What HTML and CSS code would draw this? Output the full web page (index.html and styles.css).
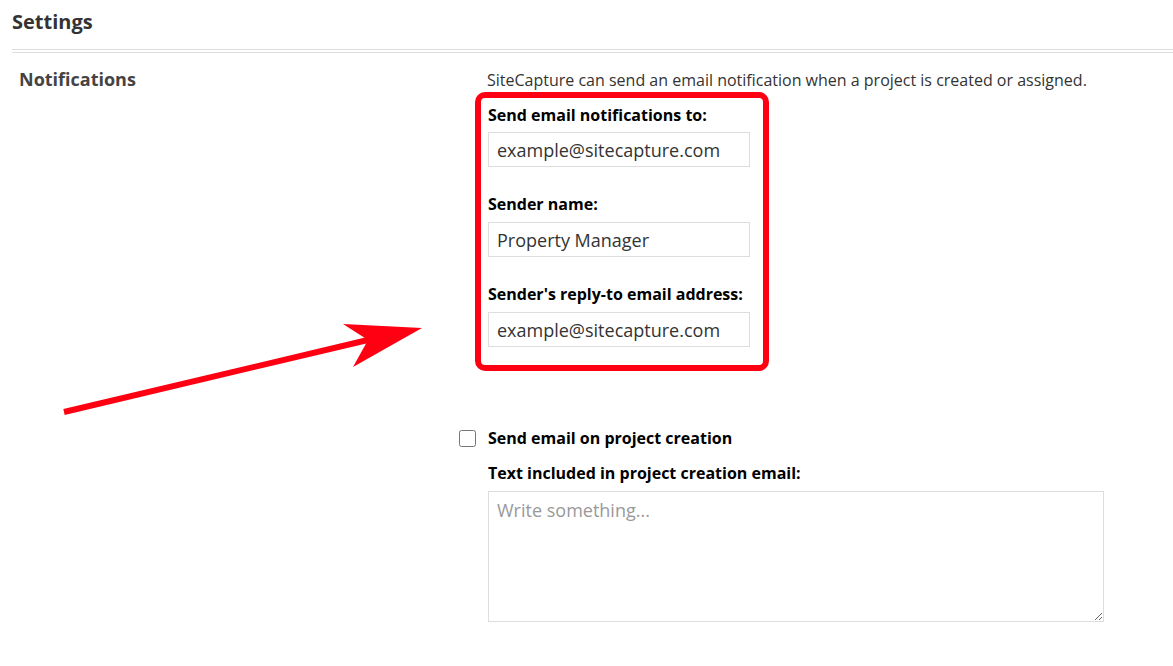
FILE: index.html
```html
<!DOCTYPE html>
<html lang="en">
<head>
    <meta charset="UTF-8">
    <meta name="viewport" content="width=device-width, initial-scale=1.0">
    <title>Settings</title>
    <link rel="stylesheet" href="styles.css">
</head>
<body>
    <div class="page">
        <div class="page-header">
            <h1>Settings</h1>
        </div>

        <div class="section">
            <div class="section-title">Notifications</div>
            <div class="section-body">
                <p class="intro">SiteCapture can send an email notification when a project is created or assigned.</p>

                <div class="highlight">
                    <div class="form-group">
                        <label for="notifyTo">Send email notifications to:</label>
                        <input type="text" id="notifyTo" value="example@sitecapture.com">
                    </div>
                    <div class="form-group">
                        <label for="senderName">Sender name:</label>
                        <input type="text" id="senderName" value="Property Manager">
                    </div>
                    <div class="form-group">
                        <label for="replyTo">Sender's reply-to email address:</label>
                        <input type="text" id="replyTo" value="example@sitecapture.com">
                    </div>
                </div>

                <div class="check-row">
                    <input type="checkbox" id="onCreate">
                    <label for="onCreate">Send email on project creation</label>
                </div>
                <div class="form-group textarea-group">
                    <label for="createText">Text included in project creation email:</label>
                    <textarea id="createText" placeholder="Write something..."></textarea>
                </div>
            </div>
        </div>

        <!-- annotation arrow pointing at the email fields -->
        <svg class="arrow" width="440" height="120" viewBox="0 0 440 120">
            <line x1="64" y1="92" x2="372" y2="19" stroke="#ff0012" stroke-width="6"/>
            <polygon points="422,8 343,4 368,20 353,47" fill="#ff0012"/>
        </svg>
    </div>
</body>
</html>
```

FILE: styles.css
```css
body {
    font-family: "Open Sans", "Noto Sans", sans-serif;
    color: #333;
    background: #fff;
    margin: 0;
}
.page {
    position: relative;
    height: 666px;
    overflow: hidden;
}
.page-header {
    margin-left: 12px;
    padding-top: 8px;
    height: 41px;
    border-bottom: 4px double #ddd;
}
.page-header h1 {
    margin: 0;
    font-size: 20px;
    line-height: 27px;
    font-weight: bold;
    color: #333;
}
.section {
    display: grid;
    grid-template-columns: 459px 1fr;
    padding-top: 14px;
}
.section-title {
    padding-left: 19px;
    font-size: 18px;
    font-weight: bold;
    color: #444;
    line-height: 24px;
}
.intro {
    margin: 1px 0 0 28px;
    font-size: 16px;
    line-height: 24px;
}
.highlight {
    width: 262px;
    margin: 0 0 0 16px;
    padding: 7px 13px 18px 7px;
    border: 6px solid #ff0012;
    border-radius: 10px;
}
.form-group label {
    display: block;
    font-size: 16px;
    font-weight: bold;
    color: #000;
    line-height: 20px;
    margin: 0 0 8px;
}
.highlight .form-group:first-child label {
    margin-bottom: 7px;
}
.form-group + .form-group {
    margin-top: 27px;
}
input[type="text"],
textarea {
    box-sizing: border-box;
    width: 262px;
    height: 35px;
    padding: 0 8px;
    border: 1px solid #ddd;
    font-family: inherit;
    font-size: 18px;
    color: #333;
}
.check-row {
    display: flex;
    align-items: center;
    margin-top: 56px;
}
.check-row input {
    width: 17px;
    height: 17px;
    margin: 0 12px 0 0;
}
.check-row label {
    font-size: 16px;
    font-weight: bold;
    color: #000;
}
.textarea-group {
    margin-left: 29px;
    margin-top: 14px;
}
.textarea-group label {
    margin: 0 0 8px;
}
textarea {
    display: block;
    width: 616px;
    height: 131px;
    padding: 6px 8px;
    resize: vertical;
}
textarea::placeholder {
    color: #999;
}
.arrow {
    position: absolute;
    left: 0;
    top: 320px;
}
```
